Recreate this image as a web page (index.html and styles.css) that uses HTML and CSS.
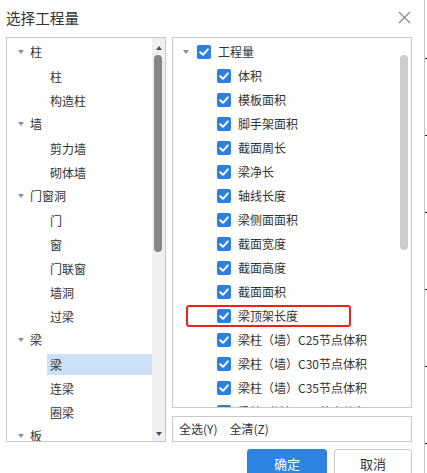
FILE: index.html
```html
<!DOCTYPE html>
<html lang="zh-CN">
<head>
<meta charset="utf-8">
<title>选择工程量</title>
<link rel="stylesheet" href="styles.css">
</head>
<body>
<div class="screen">
  <div class="dialog">
    <div class="header">
      <span class="title">选择工程量</span>
      <span class="close" aria-label="关闭">
        <svg width="13" height="13" viewBox="0 0 13 13"><path d="M1 1L12 12M12 1L1 12" stroke="#8a8a8a" stroke-width="1.3" fill="none"/></svg>
      </span>
    </div>
    <div class="content">
      <div class="left-panel">
        <div class="tree">
          <div class="row group"><span class="caret"></span><span class="label">柱</span></div>
          <div class="row child"><span class="label">柱</span></div>
          <div class="row child"><span class="label">构造柱</span></div>
          <div class="row group"><span class="caret"></span><span class="label">墙</span></div>
          <div class="row child"><span class="label">剪力墙</span></div>
          <div class="row child"><span class="label">砌体墙</span></div>
          <div class="row group"><span class="caret"></span><span class="label">门窗洞</span></div>
          <div class="row child"><span class="label">门</span></div>
          <div class="row child"><span class="label">窗</span></div>
          <div class="row child"><span class="label">门联窗</span></div>
          <div class="row child"><span class="label">墙洞</span></div>
          <div class="row child"><span class="label">过梁</span></div>
          <div class="row group"><span class="caret"></span><span class="label">梁</span></div>
          <div class="row child selected"><span class="label">梁</span></div>
          <div class="row child"><span class="label">连梁</span></div>
          <div class="row child"><span class="label">圈梁</span></div>
          <div class="row group"><span class="caret"></span><span class="label">板</span></div>
        </div>
        <div class="scrollbar dark">
          <div class="arrow-box"><span class="arrow up"></span></div>
          <div class="thumb"></div>
          <div class="spacer"></div>
          <div class="arrow-box bottom"><span class="arrow down"></span></div>
        </div>
      </div>
      <div class="right-col">
        <div class="right-tree">
          <div class="tree">
            <div class="row root"><span class="caret"></span><span class="cb"></span><span class="label">工程量</span></div>
            <div class="row item"><span class="cb"></span><span class="label">体积</span></div>
            <div class="row item"><span class="cb"></span><span class="label">模板面积</span></div>
            <div class="row item"><span class="cb"></span><span class="label">脚手架面积</span></div>
            <div class="row item"><span class="cb"></span><span class="label">截面周长</span></div>
            <div class="row item"><span class="cb"></span><span class="label">梁净长</span></div>
            <div class="row item"><span class="cb"></span><span class="label">轴线长度</span></div>
            <div class="row item"><span class="cb"></span><span class="label">梁侧面面积</span></div>
            <div class="row item"><span class="cb"></span><span class="label">截面宽度</span></div>
            <div class="row item"><span class="cb"></span><span class="label">截面高度</span></div>
            <div class="row item"><span class="cb"></span><span class="label">截面面积</span></div>
            <div class="row item marked"><span class="cb"></span><span class="label">梁顶架长度</span><span class="mark"></span></div>
            <div class="row item"><span class="cb"></span><span class="label">梁柱（墙）C25节点体积</span></div>
            <div class="row item"><span class="cb"></span><span class="label">梁柱（墙）C30节点体积</span></div>
            <div class="row item"><span class="cb"></span><span class="label">梁柱（墙）C35节点体积</span></div>
            <div class="row item"><span class="cb"></span><span class="label">梁柱（墙）C40节点体积</span></div>
          </div>
          <div class="scrollbar light">
            <div class="thumb"></div>
          </div>
        </div>
        <div class="bottom-bar">
          <span class="link">全选(Y)</span>
          <span class="link">全清(Z)</span>
        </div>
      </div>
    </div>
    <div class="footer">
      <button class="btn primary">确定</button>
      <button class="btn">取消</button>
    </div>
  </div>
  <div class="edge"></div>
</div>
</body>
</html>
```

FILE: styles.css
```css
* { box-sizing: border-box; }
html, body { margin: 0; padding: 0; background: #ffffff; }
body {
  font-family: "Noto Sans CJK SC", "Microsoft YaHei", "Noto Sans", sans-serif;
  color: #333333;
  font-size: 12px;
}
.screen { display: flex; width: 427px; height: 473px; overflow: hidden; }
.dialog {
  width: 425px;
  height: 473px;
  flex: none;
  background: #ffffff;
  border-right: 1px solid #c4c4c4;
  display: flex;
  flex-direction: column;
  overflow: hidden;
}
.dialog > * { flex: none; }
.edge {
  width: 2px;
  height: 473px;
  flex: none;
  background: repeating-linear-gradient(to bottom, transparent 0, transparent 58px, #222 58px, #222 59px, transparent 59px, transparent 77px);
}
.header {
  height: 37px;
  display: flex;
  align-items: center;
  justify-content: space-between;
  padding: 0 13px 0 6px;
}
.title { font-size: 14.6px; color: #333; line-height: 20px; margin-top: -1px; }
.close { display: flex; width: 13px; height: 13px; margin-top: -2px; }

.content { display: flex; padding-left: 6px; height: 405px; }
.left-panel {
  width: 160px;
  height: 405px;
  flex: none;
  border: 1px solid #c8c8c8;
  display: flex;
  overflow: hidden;
  margin-right: 6px;
}
.tree { flex: 1; padding-top: 2px; overflow: hidden; }
.row {
  height: 24px;
  flex: none;
  display: flex;
  align-items: center;
  white-space: nowrap;
  position: relative;
}
.label { line-height: 18px; }
.caret {
  width: 0; height: 0;
  border-left: 3px solid transparent;
  border-right: 3px solid transparent;
  border-top: 4px solid #8c8c8c;
}
.left-panel .group .caret { margin-left: 11px; margin-right: 6px; }
.left-panel .child .label {
  margin-left: 40px;
  padding-left: 3px;
  flex: 1;
  height: 21px;
  line-height: 21px;
  margin-top: 1px;
}
.left-panel .child.selected .label { background: #cce1f8; }

.scrollbar { width: 13px; display: flex; flex-direction: column; flex: none; }
.scrollbar > * { flex: none; }
.scrollbar.dark { background: #f0f0f0; }
.arrow-box { height: 17px; display: flex; align-items: center; justify-content: center; }
.arrow-box.bottom { height: 16px; }
.arrow { width: 0; height: 0; border-left: 3px solid transparent; border-right: 3px solid transparent; }
.arrow.up { border-bottom: 4px solid #4b4d5c; margin-top: 2px; }
.arrow.down { border-top: 4px solid #4b4d5c; margin-top: 1px; }
.scrollbar.dark .thumb {
  width: 8px; height: 197px; margin-left: 2px;
  background: #868686; border-radius: 4px;
}
.scrollbar .spacer { flex: 1; }

.right-col { width: 240px; flex: none; display: flex; flex-direction: column; }
.right-col > * { flex: none; }
.right-tree {
  height: 371px;
  border: 1px solid #c8c8c8;
  display: flex;
  overflow: hidden;
}
.right-tree .scrollbar { padding-top: 17px; }
.scrollbar.light .thumb {
  width: 8px; height: 195px; margin-left: 2px;
  background: #cdcdcd; border-radius: 4px;
}
.right-tree .root .caret { margin-left: 10px; margin-right: 8px; }
.right-tree .root .cb { margin-right: 7px; }
.right-tree .item .cb { margin-left: 44px; margin-right: 7px; }
.cb {
  width: 14px; height: 14px; flex: none;
  background: #2b7fe3;
  border-radius: 2px;
  background-image: url("data:image/svg+xml;utf8,<svg xmlns='http://www.w3.org/2000/svg' width='14' height='14' viewBox='0 0 14 14'><path d='M3.2 7.2L6 9.8L10.9 4.4' fill='none' stroke='white' stroke-width='2' stroke-linecap='round' stroke-linejoin='round'/></svg>");
}
.mark {
  position: absolute;
  left: 13px;
  top: 1px;
  width: 165px;
  height: 22px;
  border: 2px solid #ec2119;
  border-radius: 3px;
}

.bottom-bar {
  margin-top: 8px;
  height: 26px;
  border: 1px solid #c8c8c8;
  display: flex;
  align-items: center;
  padding-left: 6px;
  gap: 12px;
}
.link { line-height: 18px; }

.footer {
  display: flex;
  justify-content: flex-end;
  gap: 7px;
  padding-right: 12px;
  margin-top: 7px;
}
.btn {
  font-family: inherit;
  font-size: 13px;
  height: 29px;
  width: 78px;
  border: 1px solid #c8c8c8;
  background: #ffffff;
  color: #333;
  border-radius: 3px;
  padding: 0;
  line-height: 26px;
}
.btn.primary {
  width: 80px;
  background: #2e82e2;
  border-color: #2e82e2;
  color: #ffffff;
}
```
